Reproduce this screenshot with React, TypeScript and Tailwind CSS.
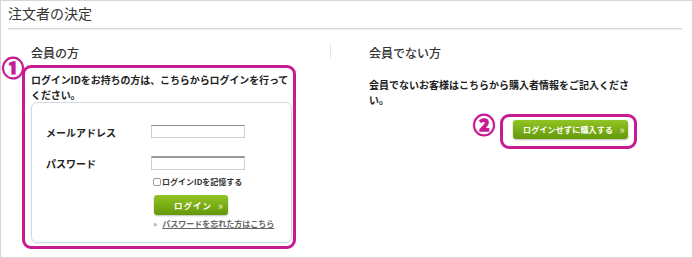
const jp = "font-['Noto_Sans_CJK_JP','Noto_Sans',sans-serif]"

function Field({ label, tall }: { label: string; tall?: boolean }) {
  return (
    <div className="flex items-start">
      <span className="w-[105px] pt-[1px] text-[10px] font-bold leading-[13px] text-[#222]">{label}</span>
      <span
        className={
          tall
            ? 'block h-[14px] w-[94px] border border-t-2 border-[#cfcfcf] border-t-[#9a9a9a] bg-white'
            : 'block h-[13px] w-[94px] border border-[#cfcfcf] border-t-[#8f8f8f] bg-white'
        }
      />
    </div>
  )
}

function GreenButton({ label, className }: { label: string; className: string }) {
  return (
    <button
      className={
        'flex items-center justify-between rounded-[3px] bg-gradient-to-b from-[#92c423] to-[#659808] font-bold text-white shadow-[0_1px_2px_rgba(0,0,0,0.25)] ' +
        className
      }
    >
      <span>{label}</span>
      <span className="text-[11px] font-normal leading-none text-[#e8f3cc]">»</span>
    </button>
  )
}

function Mark({ n, className }: { n: string; className: string }) {
  return (
    <span
      className={
        'absolute text-[22px] font-bold leading-[22px] text-[#c71a93] [-webkit-text-stroke:1.3px_#c71a93] ' + className
      }
    >
      {n}
    </span>
  )
}

export default function App() {
  return (
    <div className={`h-[258px] w-[693px] border border-[#d6d6d6] bg-white text-[#222] ${jp}`}>
      <h1 className="pl-[7px] pt-[2px] text-[14px] leading-[20px] text-[#333]">注文者の決定</h1>
      <div className="ml-[7px] mr-[10px] mt-[5px] h-px bg-[#d8d8d8] shadow-[0_1px_1px_rgba(0,0,0,0.08)]" />

      <div className="flex">
        {/* 会員 */}
        <section className="w-[329px]">
          <h2 className="pl-[30px] pt-[16px] text-[12px] font-medium leading-[16px] text-[#333]">会員の方</h2>
          <div className="relative ml-[21px] mt-[4px] h-[184px] w-[274px] rounded-[9px] border-[3px] border-[#c71a93] pl-[6px] pt-[4px]">
            <Mark n="①" className="-left-[23px] -top-[13px]" />
            <p className="text-[10px] font-bold leading-[15px] tracking-[-0.1px]">
              ログインIDをお持ちの方は、こちらからログインを行って
              <br />
              ください。
            </p>
            <div className="h-[141px] w-[261px] rounded-[6px] border border-[#d3d8e0] pl-[14px] pt-[22px] shadow-[0_1px_1px_rgba(0,0,0,0.06)]">
              <Field label="メールアドレス" />
              <div className="mt-[17px]">
                <Field label="パスワード" tall />
              </div>
              <div className="ml-[107px] flex flex-col items-start">
                <label className="mt-[7px] flex items-center gap-[1px] text-[8px] font-bold leading-[9px] text-[#333]">
                  <span className="block h-[8px] w-[8px] rounded-[2px] border border-[#9a9a9a] bg-white" />
                  ログインIDを記憶する
                </label>
                <GreenButton label="ログイン" className="ml-[1px] mt-[9px] h-[20px] w-[74px] pl-[20px] pr-[4px] text-[8.5px] tracking-[1px]" />
                <div className="mt-[3px] flex items-center gap-[5px] text-[8px] font-bold leading-[11px] text-[#666]">
                  <span className="text-[#999]">»</span>
                  <a className="underline">パスワードを忘れた方はこちら</a>
                </div>
              </div>
            </div>
          </div>
        </section>

        {/* 会員でない */}
        <section className="flex flex-1">
          <div className="mt-[14px] h-[15px] w-px bg-[#e6e6e6]" />
          <div className="pl-[38px]">
            <h2 className="pt-[16px] text-[12px] font-medium leading-[16px] text-[#333]">会員でない方</h2>
            <p className="mt-[16px] w-[262px] text-[10px] font-bold leading-[15px]">
              会員でないお客様はこちらから購入者情報をご記入くださ
              <br />
              い。
            </p>
            <div className="relative ml-[131px] mt-[7px] h-[35px] w-[137px] rounded-[9px] border-[3px] border-[#c71a93] pl-[10px] pt-[3px]">
              <Mark n="②" className="-left-[30px] -top-[5px]" />
              <GreenButton label="ログインせずに購入する" className="h-[19px] w-[115px] pl-[10px] pr-[3px] text-[8px] tracking-[0.2px]" />
            </div>
          </div>
        </section>
      </div>
    </div>
  )
}
